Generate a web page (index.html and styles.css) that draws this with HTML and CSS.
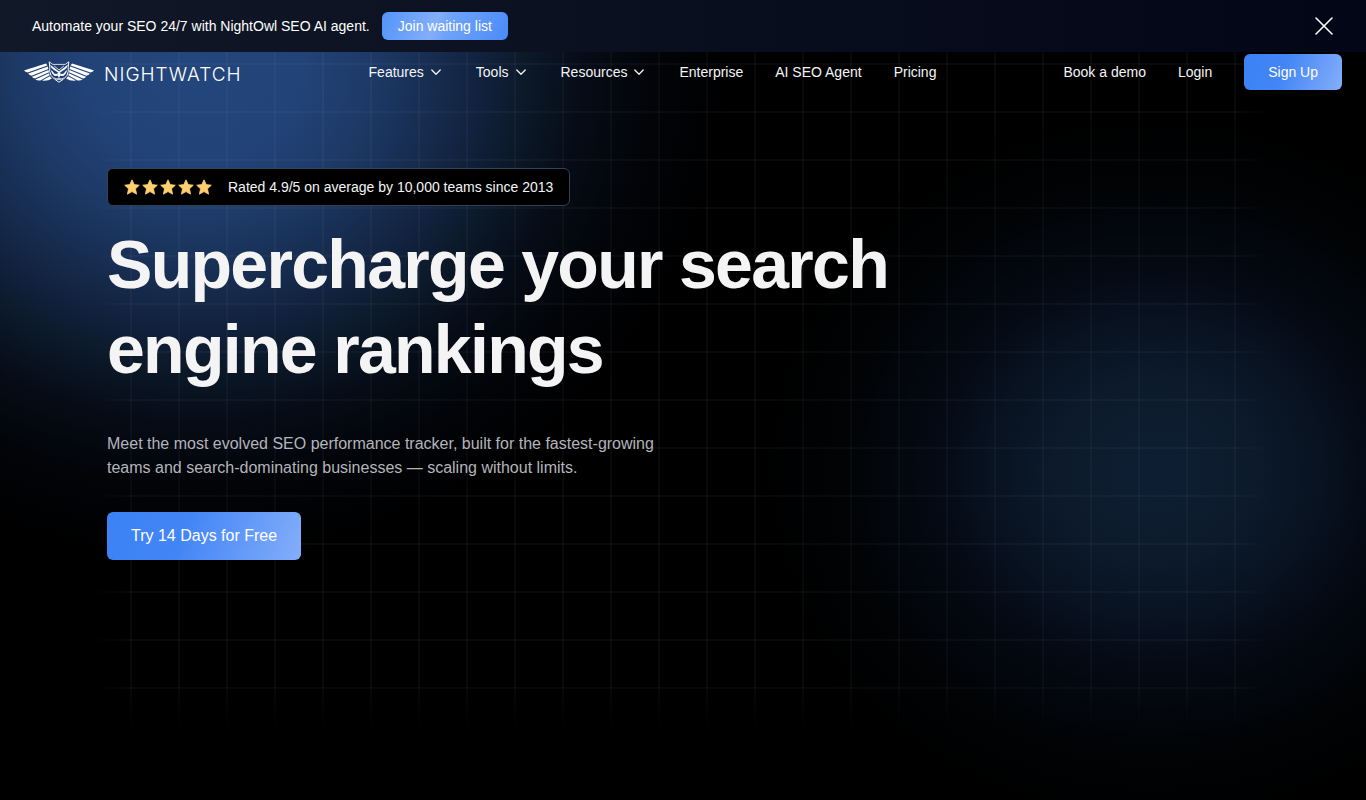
FILE: index.html
```
<!DOCTYPE html>
<html lang="en">
<head>
    <meta charset="UTF-8">
    <meta name="viewport" content="width=device-width, initial-scale=1.0">
    <title>Nightwatch - Supercharge your search engine rankings</title>
    <link rel="stylesheet" href="styles.css">
</head>
<body>
    <!-- Shared icons -->
    <svg class="sprite" aria-hidden="true">
        <symbol id="chevron" viewBox="0 0 16 16">
            <path d="M3.8 6 8 10.2 12.2 6" fill="none" stroke="currentColor" stroke-width="1.3" stroke-linecap="round" stroke-linejoin="round"/>
        </symbol>
        <symbol id="star" viewBox="0 0 16 16">
            <path d="M8 .8 10.2 5.6 15.3 6.2 11.5 9.8 12.6 15.2 8 12.6 3.4 15.2 4.5 9.8 .7 6.2 5.8 5.6Z" fill="#ffcf70" stroke="#ffcf70" stroke-width=".8" stroke-linejoin="round"/>
        </symbol>
    </svg>

    <!-- Announcement bar -->
    <div class="banner">
        <p>Automate your SEO 24/7 with NightOwl SEO AI agent.</p>
        <a href="#" class="banner-button">Join waiting list</a>
        <button type="button" class="banner-close" aria-label="Close">
            <svg width="20" height="20" viewBox="0 0 20 20">
                <path d="M2 2 18 18M18 2 2 18" fill="none" stroke="currentColor" stroke-width="1.6" stroke-linecap="round"/>
            </svg>
        </button>
    </div>

    <div class="page">
        <div class="grid-lines"></div>

        <header class="navbar">
            <a href="#" class="logo">
                <svg width="70" height="22" viewBox="0 0 70 22" aria-hidden="true">
                    <defs>
                        <g id="owl-half" fill="#fff">
                            <!-- feathers -->
                            <path d="M0 9.4Q8 7 22 2.6L23.4 4.6 3.6 11.4Q1.4 11 0 9.4Z"/>
                            <path d="M4.2 12.6 23.8 5.6 24.4 8 7.6 14.8Q5.4 14.4 4.2 12.6Z"/>
                            <path d="M8 15.8 24.5 9 25 11.3 11 17.6Q9 17.4 8 15.8Z"/>
                            <path d="M11.4 18.4 25.1 12.3 25.6 14.3 16.4 19.4Q13.4 19.8 11.4 18.4Z"/>
                            <path d="M18 19.6 25.9 15.3 27.8 17.4 24.4 19.3Q21 20 18 19.6Z"/>
                            <!-- head outline and beak -->
                            <path d="M25.2.8 25.8 6.2Q25 10.4 27 14.4L30.4 18 35 21.2" fill="none" stroke="#fff"/>
                            <path d="M25.2.8 28.8 3.4H35" fill="none" stroke="#fff" stroke-width=".8"/>
                            <path d="M26 3.4 35 10.4V12L29.6 8.8Q27 7.2 26 3.4Z"/>
                            <path d="M30.2 5 35 9" fill="none" stroke="#fff" stroke-width=".8"/>
                            <path d="M26.8 9 28.8 10.4Q30 13.4 33 12.8L34 14.8 30.8 15Q28 13.6 26.8 9Z"/>
                            <path d="M33.6 11.6H35V17L33.4 14Z"/>
                            <path d="M29.4 16 32 17.4 35 17.2V18.8L31.8 18.6Z"/>
                        </g>
                    </defs>
                    <use href="#owl-half"/>
                    <use href="#owl-half" transform="matrix(-1 0 0 1 70 0)"/>
                </svg>
                <span>NIGHTWATCH</span>
            </a>

            <nav class="menu">
                <button type="button">Features <svg class="chevron"><use href="#chevron"/></svg></button>
                <button type="button">Tools <svg class="chevron"><use href="#chevron"/></svg></button>
                <button type="button">Resources <svg class="chevron"><use href="#chevron"/></svg></button>
                <a href="#">Enterprise</a>
                <a href="#">AI SEO Agent</a>
                <a href="#">Pricing</a>
            </nav>

            <div class="menu">
                <a href="#">Book a demo</a>
                <a href="#">Login</a>
                <a href="#" class="button button-small">Sign Up</a>
            </div>
        </header>

        <main class="hero">
            <div class="rating">
                <div class="stars" role="img" aria-label="5 stars">
                    <svg><use href="#star"/></svg>
                    <svg><use href="#star"/></svg>
                    <svg><use href="#star"/></svg>
                    <svg><use href="#star"/></svg>
                    <svg><use href="#star"/></svg>
                </div>
                <span>Rated 4.9/5 on average by 10,000 teams since 2013</span>
            </div>
            <h1>Supercharge your search engine rankings</h1>
            <p>Meet the most evolved SEO performance tracker, built for the fastest-growing teams and search-dominating businesses — scaling without limits.</p>
            <a href="#" class="button">Try 14 Days for Free</a>
        </main>
    </div>
</body>
</html>
```

FILE: styles.css
```
* {
    box-sizing: border-box;
}

body {
    margin: 0;
    min-height: 100vh;
    display: flex;
    flex-direction: column;
    background: #000;
    color: #f4f4f5;
    font-family: "Liberation Sans", Arial, sans-serif;
    font-size: 14px;
    line-height: 20px;
}

a,
button {
    color: inherit;
    font: inherit;
    text-decoration: none;
}

button {
    padding: 0;
    border: none;
    background: none;
    cursor: pointer;
}

.sprite {
    position: absolute;
    width: 0;
    height: 0;
}

/* Announcement bar */
.banner {
    display: flex;
    align-items: center;
    gap: 12px;
    height: 52px;
    padding: 0 32px;
    background: linear-gradient(to right, #111827, #020617);
}

.banner p {
    margin: 0;
    color: #fff;
}

.banner-button {
    padding: 4px 16px;
    border-radius: 6px;
    background: linear-gradient(110deg, #5294f9, #84aefa 42%, #6fa3fa 52%, #4b8bf7);
    color: #fff;
}

.banner-close {
    display: flex;
    margin-left: auto;
    color: #fff;
}

/* Page background with the two glows */
.page {
    position: relative;
    flex: 1;
    background:
        radial-gradient(540px 500px at 195px 10px, #23467d 0%, #224377 20%, #1d3a68 32%, #182f54 42%, #122340 52%, #0b1827 62%, #060c17 72%, #020408 84%, transparent 100%),
        radial-gradient(400px 360px at calc(100% - 210px) 418px, #0e1e33 0%, #0c1a2b 25%, #081220 42%, #040913 57%, #010305 78%, transparent 100%);
}

.grid-lines {
    position: absolute;
    inset: 0 0 auto;
    width: 1200px;
    max-width: 100%;
    height: 680px;
    margin: 0 auto;
    background:
        linear-gradient(to right, rgba(255, 255, 255, 0.03) 2px, transparent 2px) 47px 0 / 48px 48px,
        linear-gradient(to bottom, rgba(255, 255, 255, 0.03) 2px, transparent 2px) 0 11px / 48px 48px;
    mask-image:
        linear-gradient(to right, transparent 8px, #000 48px, #000 calc(100% - 48px), transparent calc(100% - 8px)),
        linear-gradient(to bottom, #000 calc(100% - 48px), transparent);
    mask-composite: intersect;
}

/* Navigation */
.navbar {
    position: relative;
    display: flex;
    align-items: center;
    justify-content: space-between;
    height: 40px;
    padding: 0 24px;
}

.logo {
    display: flex;
    align-items: center;
    gap: 10px;
    color: #fff;
    font-family: Inter, sans-serif;
    font-size: 19px;
    font-weight: 300;
    letter-spacing: 1px;
}

.logo span {
    padding-top: 5px;
}

.menu {
    display: flex;
    align-items: center;
    gap: 32px;
}

.menu button {
    display: flex;
    align-items: center;
    gap: 4px;
}

.chevron {
    width: 16px;
    height: 16px;
}

.button {
    display: inline-block;
    padding: 12px 24px;
    border-radius: 6px;
    background: linear-gradient(110deg, #3b82f6, #4385f6 40%, #84aefa);
    color: #fff;
    font-size: 16px;
    line-height: 24px;
}

.button-small {
    padding: 8px 24px;
    font-size: 14px;
    line-height: 20px;
}

/* Hero */
.hero {
    position: relative;
    max-width: 1152px;
    margin: 0 auto;
    padding: 76px 0 96px;
}

.rating {
    display: inline-flex;
    align-items: center;
    gap: 16px;
    padding: 8px 16px;
    border: 1px solid #334155;
    border-radius: 6px;
    background: #000;
}

.stars {
    display: flex;
    gap: 2px;
}

.stars svg {
    width: 16px;
    height: 16px;
}

.hero h1 {
    max-width: 896px;
    margin: 16px 0 40px;
    font-size: 68px;
    line-height: 85px;
    letter-spacing: -0.025em;
}

.hero p {
    max-width: 576px;
    margin: 0 0 32px;
    color: #b4b4bb;
    font-size: 16px;
    line-height: 24px;
}
```
